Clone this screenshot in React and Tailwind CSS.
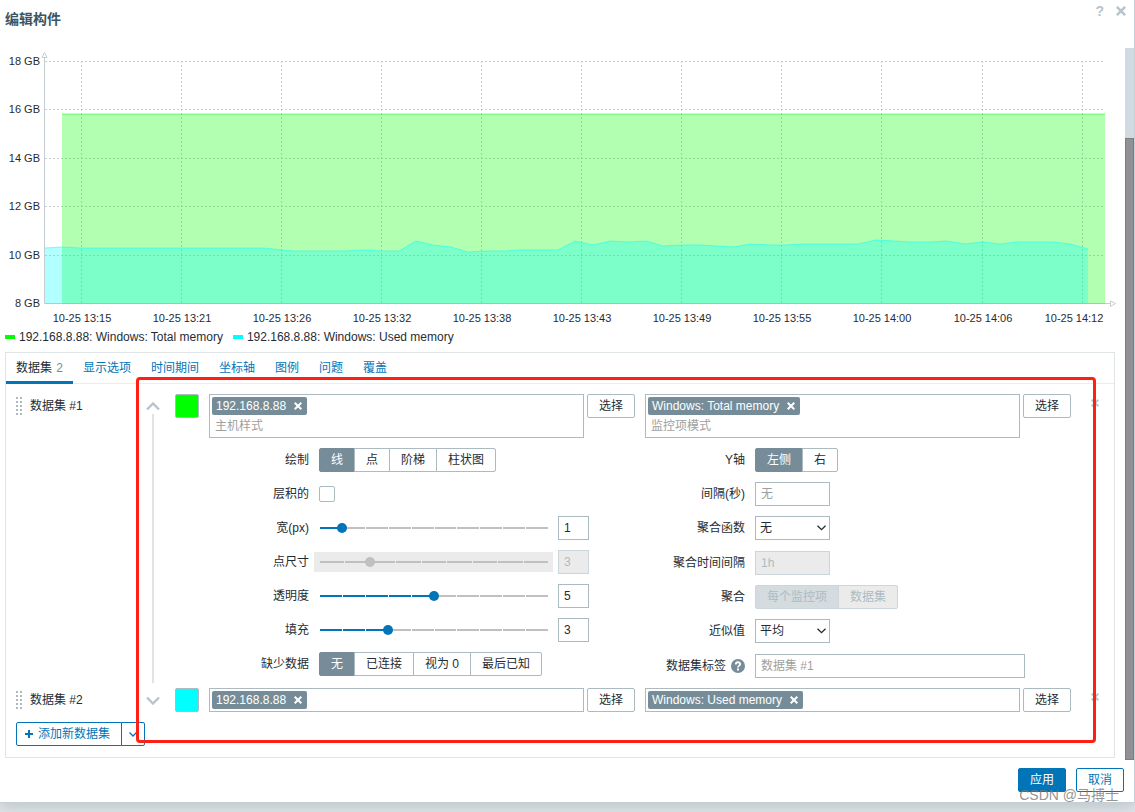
import React, { useState } from "react";

const yTicks = [
  { y: 61, label: "18 GB" },
  { y: 109, label: "16 GB" },
  { y: 158, label: "14 GB" },
  { y: 206, label: "12 GB" },
  { y: 255, label: "10 GB" },
  { y: 303, label: "8 GB" },
];

const xTicks = [
  { x: 81, label: "10-25 13:15" },
  { x: 181, label: "10-25 13:21" },
  { x: 281, label: "10-25 13:26" },
  { x: 381, label: "10-25 13:32" },
  { x: 481, label: "10-25 13:38" },
  { x: 581, label: "10-25 13:43" },
  { x: 681, label: "10-25 13:49" },
  { x: 781, label: "10-25 13:55" },
  { x: 881, label: "10-25 14:00" },
  { x: 982, label: "10-25 14:06" },
  { x: 1082, labelX: 1073, label: "10-25 14:12" },
];

const usedMemory =
  "45,248 62,247 80,248 263,248 293,251 346,251 363,250 381,251 399,251 416,241 433,245 451,247 468,252 487,251 505,251 520,250 558,250 575,241 593,245 611,241 629,242 646,241 663,246 681,245 700,245 716,246 734,247 750,244 770,245 785,245 803,244 858,244 876,240 894,241 911,242 930,242 947,241 965,244 983,242 1000,244 1017,242 1053,242 1070,244 1088,249";

const tabs = ["显示选项", "时间期间", "坐标轴", "图例", "问题", "覆盖"];

const Chart = () => (
  <svg viewBox="0 48 1125 280" className="block w-full" role="img" aria-label="Windows memory">
    <g stroke="#c5ced3" strokeDasharray="2 2">
      {yTicks.slice(0, 5).map((t) => (
        <line key={t.y} x1="45" x2="1104" y1={t.y + 0.5} y2={t.y + 0.5} />
      ))}
      {xTicks.map((t) => (
        <line key={t.x} x1={t.x + 0.5} x2={t.x + 0.5} y1="61" y2="303" />
      ))}
    </g>
    <g stroke="#c5ced3" fill="#fff">
      <path d="M44.5 57V303.5H1110" fill="none" />
      <path d="M42 57.5L44.5 52.5L47 57.5Z" />
      <path d="M1110.5 301L1115.5 303.5L1110.5 306.5Z" />
    </g>
    <rect x="62" y="114" width="1043" height="190" fill="#00ff00" fillOpacity="0.3" />
    <line x1="62" x2="1105" y1="114" y2="114" stroke="#00ff00" strokeOpacity="0.5" />
    <polygon points={`45,304 ${usedMemory} 1088,304`} fill="#00ffff" fillOpacity="0.3" />
    <polyline points={usedMemory} fill="none" stroke="#00ffff" strokeOpacity="0.5" />
    <g fontSize="11" fill="#1f2c33">
      {yTicks.map((t) => (
        <text key={t.label} x="40" y={t.y + 4} textAnchor="end">{t.label}</text>
      ))}
      {xTicks.map((t) => (
        <text key={t.label} x={(t.labelX || t.x) + 1} y="322" textAnchor="middle">{t.label}</text>
      ))}
    </g>
  </svg>
);

const CrossIcon = ({ className }) => (
  <svg viewBox="0 0 8 8" className={className} fill="none" stroke="currentColor" strokeWidth="2">
    <path d="M0.7 0.7L7.3 7.3M7.3 0.7L0.7 7.3" />
  </svg>
);

const DragHandle = () => (
  <svg width="7" height="18" viewBox="0 0 7 18" fill="#acbbc2" className="shrink-0">
    {[0, 4, 8, 12, 16].map((y) => (
      <g key={y}>
        <rect x="0" y={y} width="2" height="2" />
        <rect x="4" y={y} width="2" height="2" />
      </g>
    ))}
  </svg>
);

const Segmented = ({ name, options, disabled }) => (
  <div role="radiogroup" aria-label={name} className="flex">
    {options.map((o, i) => (
      <label key={o} className={i === 0 ? "relative flex" : "relative -ml-px flex"}>
        <input type="radio" name={name} defaultChecked={i === 0} disabled={disabled} className="peer sr-only" />
        <span
          className={
            (disabled
              ? "border-[#ccd5d9] bg-[#ebebeb] text-[#acbbc2] peer-checked:bg-[#d5dce0]"
              : "border-[#acbbc2] bg-white peer-checked:border-[#768d99] peer-checked:bg-[#768d99] peer-checked:text-white") +
            " block h-6 whitespace-nowrap border px-[11px] leading-[22px]" +
            (i === 0 ? " rounded-l-[2px]" : "") +
            (i === options.length - 1 ? " rounded-r-[2px]" : "")
          }
        >
          {o}
        </span>
      </label>
    ))}
  </div>
);

const Slider = ({ id, min = 0, initial, disabled }) => {
  const [value, setValue] = useState(initial);
  const steps = Array.from({ length: 10 - min }, (_, i) => i + min);

  return (
    <>
      <div className={disabled ? "relative -ml-[5px] h-5 w-[239px] bg-[#ebebeb]" : "relative -ml-[5px] h-5 w-[239px]"}>
        <div className="absolute left-[6px] right-[5px] top-[9px] flex h-[2px] gap-px">
          {steps.map((s) => (
            <span key={s} className={s < value && !disabled ? "flex-1 bg-[#0275b8]" : "flex-1 bg-[#c0c0c0]"} />
          ))}
        </div>
        <input
          id={id}
          type="range"
          min={min}
          max="10"
          value={value}
          disabled={disabled}
          onChange={(e) => setValue(Number(e.target.value))}
          className="relative block h-5 w-full appearance-none bg-transparent [&::-webkit-slider-thumb]:h-[10px] [&::-webkit-slider-thumb]:w-[10px] [&::-webkit-slider-thumb]:appearance-none [&::-webkit-slider-thumb]:rounded-full [&::-webkit-slider-thumb]:bg-[#0275b8] disabled:[&::-webkit-slider-thumb]:bg-[#c0c0c0]"
        />
      </div>
      <input
        type="text"
        aria-label={id}
        value={value}
        disabled={disabled}
        onChange={(e) => setValue(Number(e.target.value) || 0)}
        className="ml-[5px] h-6 w-[31px] border border-[#acbbc2] px-[5px] disabled:border-[#ccd5d9] disabled:bg-[#ebebeb] disabled:text-[#acbbc2]"
      />
    </>
  );
};

const Field = ({ label, htmlFor, help, tall, children }) => (
  <div className={tall ? "flex h-[25px] items-start" : "flex h-6 items-center"}>
    <label htmlFor={htmlFor} className="mr-[10px] flex w-[100px] shrink-0 items-center justify-end whitespace-nowrap leading-6">
      {label}
      {help && (
        <svg viewBox="0 0 14 14" className="ml-[5px] h-[14px] w-[14px]">
          <circle cx="7" cy="7" r="7" fill="#768d99" />
          <path d="M4.8 5.4C4.8 2.6 9.2 2.6 9.2 5.1C9.2 6.7 7 6.6 7 8.4" fill="none" stroke="#fff" strokeWidth="1.8" />
          <rect x="6" y="9.5" width="2" height="2" fill="#fff" />
        </svg>
      )}
    </label>
    {children}
  </div>
);

const SelectBox = ({ id, options }) => (
  <div className="relative">
    <select id={id} className="block h-6 w-[75px] appearance-none border border-[#acbbc2] bg-white px-1">
      {options.map((o) => (
        <option key={o}>{o}</option>
      ))}
    </select>
    <svg viewBox="0 0 9 6" className="pointer-events-none absolute right-1 top-[9px] h-[6px] w-[9px]" fill="none" stroke="#1f2c33" strokeWidth="1.3">
      <path d="M0.5 0.7L4.5 4.7L8.5 0.7" />
    </svg>
  </div>
);

const MultiSelect = ({ chip, placeholder }) => (
  <div className="flex items-start gap-[3px]">
    <div className="min-w-0 flex-1 border border-[#acbbc2] p-[2px]">
      <div className="flex">
        <span className="flex h-[18px] items-center whitespace-nowrap rounded-[2px] bg-[#768d99] pl-1 pr-[5px] text-white">
          {chip}
          <button type="button" aria-label={`移除 ${chip}`} className="ml-2">
            <CrossIcon className="h-2 w-2" />
          </button>
        </span>
      </div>
      {placeholder && (
        <input type="text" aria-label={placeholder} placeholder={placeholder} className="mt-[2px] block h-[18px] w-full px-[3px] placeholder:text-[#a0a0a0]" />
      )}
    </div>
    <button type="button" className="h-6 shrink-0 rounded-[2px] border border-[#acbbc2] bg-white px-[11px]">选择</button>
  </div>
);

const DataSet = ({ name, color, item, open, children }) => (
  <div className="flex">
    <div className="flex w-[130px] shrink-0 items-start pl-[10px]">
      <div className="flex h-6 items-center gap-[7px]">
        <DragHandle />
        <span>{name}</span>
      </div>
    </div>
    <div className="flex w-[34px] shrink-0 flex-col items-center">
      <button type="button" aria-label={open ? "折叠" : "展开"} className="flex h-6 shrink-0 items-center">
        <svg viewBox="0 0 14 9" className="h-[9px] w-[14px]" fill="none" stroke="#b8c4ca" strokeWidth="2.4">
          <path d={open ? "M1 7.5L7 1.5L13 7.5" : "M1 1.5L7 7.5L13 1.5"} />
        </svg>
      </button>
      {open && <div className="-mt-1 mb-[-5px] w-[2px] flex-1 bg-[#dfe4e7]" />}
    </div>
    <button
      type="button"
      aria-label={`${name} 颜色`}
      className={
        color === "green"
          ? "ml-[5px] h-6 w-6 shrink-0 rounded-[2px] border border-[#acbbc2] bg-[#00ff00]"
          : "ml-[5px] h-6 w-6 shrink-0 rounded-[2px] border border-[#acbbc2] bg-[#00ffff]"
      }
    />
    <div className="ml-[10px] min-w-0 flex-1">
      <div className="grid grid-cols-2 gap-x-[10px]">
        <MultiSelect chip="192.168.8.88" placeholder={open && "主机样式"} />
        <MultiSelect chip={item} placeholder={open && "监控项模式"} />
      </div>
      {children}
    </div>
    <button type="button" aria-label={`删除 ${name}`} className="ml-5 mr-[14px] mt-[5px] h-2 w-[9px] shrink-0 text-[#b8c4ca]">
      <CrossIcon className="h-2 w-2" />
    </button>
  </div>
);

const inputStyle =
  "h-6 border border-[#acbbc2] px-[5px] placeholder:text-[#a0a0a0] disabled:border-[#ccd5d9] disabled:bg-[#ebebeb] disabled:text-[#acbbc2]";

const DataSetOptions = () => (
  <div className="mt-[10px] grid grid-cols-2 gap-x-[10px]">
    <div className="flex flex-col gap-[10px]">
      <Field label="绘制">
        <Segmented name="绘制" options={["线", "点", "阶梯", "柱状图"]} />
      </Field>
      <Field label="层积的" htmlFor="stacked">
        <input id="stacked" type="checkbox" className="h-4 w-4 appearance-none rounded-[2px] border border-[#acbbc2] bg-white checked:bg-[#0275b8]" />
      </Field>
      <Field label="宽(px)" htmlFor="width">
        <Slider id="width" initial={1} />
      </Field>
      <Field label="点尺寸" htmlFor="pointsize">
        <Slider id="pointsize" min={1} initial={3} disabled />
      </Field>
      <Field label="透明度" htmlFor="transparency">
        <Slider id="transparency" initial={5} />
      </Field>
      <Field label="填充" htmlFor="fill">
        <Slider id="fill" initial={3} />
      </Field>
      <Field label="缺少数据">
        <Segmented name="缺少数据" options={["无", "已连接", "视为 0", "最后已知"]} />
      </Field>
    </div>

    <div className="flex flex-col gap-[10px]">
      <Field label="Y轴">
        <Segmented name="Y轴" options={["左侧", "右"]} />
      </Field>
      <Field label="间隔(秒)" htmlFor="timeshift">
        <input id="timeshift" type="text" placeholder="无" className={inputStyle + " w-[75px]"} />
      </Field>
      <Field label="聚合函数" htmlFor="aggregate" tall>
        <SelectBox id="aggregate" options={["无", "平均", "最小", "最大"]} />
      </Field>
      <Field label="聚合时间间隔" htmlFor="interval">
        <input id="interval" type="text" defaultValue="1h" disabled className={inputStyle + " w-[75px]"} />
      </Field>
      <Field label="聚合">
        <Segmented name="聚合" options={["每个监控项", "数据集"]} disabled />
      </Field>
      <Field label="近似值" htmlFor="approximation" tall>
        <SelectBox id="approximation" options={["平均", "最小", "最大", "全部"]} />
      </Field>
      <Field label="数据集标签" htmlFor="setlabel" help>
        <input id="setlabel" type="text" placeholder="数据集 #1" className={inputStyle + " w-[270px]"} />
      </Field>
    </div>
  </div>
);

const App = () => {
  return (
    <div className="min-h-screen bg-[#e0e5e8] font-['Liberation_Sans','Noto_Sans_CJK_SC',sans-serif] text-[12px] leading-4 text-[#1f2c33]">
      <div className="relative border-b border-r border-[#c5d0d6] bg-white shadow-[0_5px_14px_rgba(60,85,99,0.2)]">
        <header className="flex h-12 items-start justify-between pl-[5px] pr-[8px]">
          <h4 className="mt-[9px] text-[14px] font-bold leading-5 text-[#3c5563]">编辑构件</h4>
          <div className="mt-[3px] flex h-4 items-center gap-3 text-[#b8c4ca]">
            <a href="#help" aria-label="帮助" className="text-[14px] font-bold">?</a>
            <button type="button" aria-label="关闭">
              <CrossIcon className="h-[10px] w-[10px]" />
            </button>
          </div>
        </header>

        <div className="flex">
          <div className="min-w-0 flex-1">
            <Chart />
            <div className="flex items-center gap-[10px] pl-[5px] leading-[18px]">
              <span className="flex items-center gap-1">
                <span className="h-1 w-[10px] bg-[#00ff00]" />
                192.168.8.88: Windows: Total memory
              </span>
              <span className="flex items-center gap-1">
                <span className="h-1 w-[10px] bg-[#00ffff]" />
                192.168.8.88: Windows: Used memory
              </span>
            </div>

            <div className="relative mb-[2px] ml-[5px] mr-[10px] mt-[6px] border border-[#dfe4e7]">
              <nav className="flex h-[31px] border-b border-[#ebeef0]">
                <a href="#datasets" className="h-[31px] border-b-[3px] border-[#0275b8] px-[10px] leading-[30px]">
                  数据集 <span className="ml-px text-[#768d99]">2</span>
                </a>
                {tabs.map((t) => (
                  <a key={t} href={`#${t}`} className="px-[10px] leading-[30px] text-[#0275b8]">{t}</a>
                ))}
              </nav>

              <div className="flex flex-col gap-[10px] pb-[11px] pt-[10px]">
                <DataSet name="数据集 #1" color="green" item="Windows: Total memory" open>
                  <DataSetOptions />
                </DataSet>
                <DataSet name="数据集 #2" color="cyan" item="Windows: Used memory" />
                <div className="flex pl-[10px]">
                  <button type="button" className="flex h-6 items-center gap-[5px] rounded-l-[2px] border border-[#0275b8] bg-white pl-2 pr-[11px] text-[#0275b8]">
                    <svg viewBox="0 0 8 8" className="h-2 w-2" stroke="currentColor" strokeWidth="2">
                      <path d="M4 0V8M0 4H8" />
                    </svg>
                    添加新数据集
                  </button>
                  <button type="button" aria-label="更多" className="-ml-px flex h-6 w-6 items-center justify-center rounded-r-[2px] border border-[#0275b8] bg-white text-[#0275b8]">
                    <svg viewBox="0 0 8 5" className="h-[5px] w-2" fill="none" stroke="currentColor" strokeWidth="1.3">
                      <path d="M0.5 0.5L4 4L7.5 0.5" />
                    </svg>
                  </button>
                </div>
              </div>

              {/* highlighted area */}
              <div className="pointer-events-none absolute bottom-[14px] left-[130px] right-[18px] top-6 rounded-[4px] border-[3px] border-[#ff2015]" />
            </div>
          </div>

          {/* scrollbar */}
          <div className="flex w-[9px] shrink-0 flex-col bg-[#d2dae1] pt-[90px]">
            <div className="flex-1 border border-[#7b7d80] bg-[#8f9194]" />
          </div>
        </div>

        <footer className="flex justify-end gap-[10px] pb-[10px] pr-[10px] pt-2">
          <button type="button" className="h-6 rounded-[2px] border border-[#0275b8] bg-[#0275b8] px-[11px] text-white">应用</button>
          <button type="button" className="h-6 rounded-[2px] border border-[#0275b8] bg-white px-[11px] text-[#0275b8]">取消</button>
        </footer>

        <span className="pointer-events-none absolute -bottom-px right-[15px] whitespace-nowrap text-[14px] text-[#777]/80">CSDN @马搏士</span>
      </div>
    </div>
  );
};

export default App;
